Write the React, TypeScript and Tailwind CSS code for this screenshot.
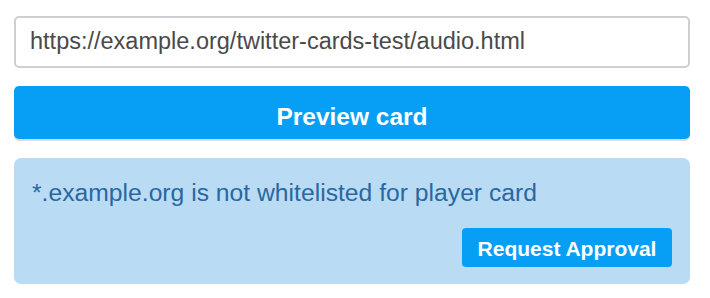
export default function App() {
  return (
    <div className="w-[710px] h-[298px] bg-white pl-[14px] pr-[20px] pt-[16px]" style={{ fontFamily: '"Liberation Sans", Arial, Helvetica, sans-serif' }}>
      <div className="h-[52px] w-full rounded-[5px] border-2 border-[#cfcfcf] bg-white flex items-center px-[14px]">
        <span className="text-[23.5px] text-[#4a4a4a] leading-none">https://example.org/twitter-cards-test/audio.html</span>
      </div>
      <button className="mt-[18px] h-[53px] w-full rounded-[5px] bg-[#069ff5] text-white font-bold text-[24.5px] shadow-[0_2px_0_#dcdcdc] flex items-center justify-center pt-[9px]">
        Preview card
      </button>
      <div className="mt-[19px] h-[126px] rounded-[7px] bg-[#b9dcf4] pl-[18px] pr-[18px] pt-[18px] flex flex-col">
        <p className="text-[24.7px] leading-[34px] text-[#2a67a0]">*.example.org is not whitelisted for player card</p>
        <div className="mt-[18px] flex justify-end">
          <button className="h-[39px] w-[210px] rounded-[4px] bg-[#069ff5] text-white font-bold text-[21px] flex items-center justify-center pt-[3px]">
            Request Approval
          </button>
        </div>
      </div>
    </div>
  );
}
